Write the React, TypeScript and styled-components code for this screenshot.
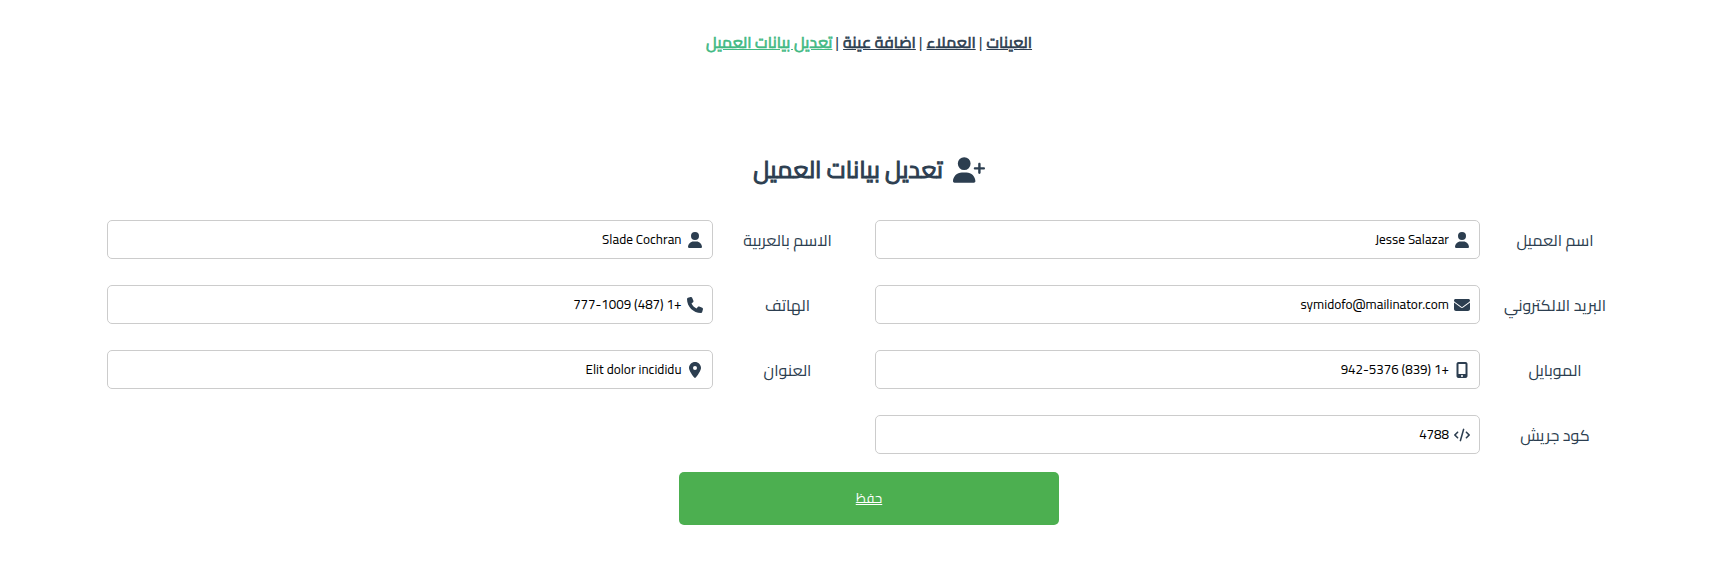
import React from "react";
import styled, { createGlobalStyle } from "styled-components";
import {
  FaCode,
  FaEnvelope,
  FaLocationDot,
  FaMobileScreenButton,
  FaPhone,
  FaUser,
  FaUserPlus,
} from "react-icons/fa6";
import type { IconType } from "react-icons";

const GlobalStyle = createGlobalStyle`
  * { box-sizing: border-box; }
  body {
    margin: 0;
    background: #fff;
    color: #2c3e50;
    font-family: Cairo, "Noto Sans", "DejaVu Sans", sans-serif;
  }
`;

const Page = styled.div`
  padding-left: 18px;
`;

const Nav = styled.nav`
  display: flex;
  justify-content: center;
  align-items: center;
  gap: 4px;
  padding: 29px 30px 31px;
  font-size: 16px;
  line-height: 26px;
`;

const NavLink = styled.a<{ $active?: boolean }>`
  color: ${(p) => (p.$active ? "#42b983" : "#2c3e50")};
  -webkit-text-stroke: 0.04em;
`;

const Separator = styled.span`
  margin: 0 -1px;
  padding: 0 1px 0 0;
`;

const Title = styled.h1`
  display: flex;
  justify-content: center;
  align-items: center;
  gap: 10px;
  margin: 64px 0 30px;
  font-size: 24px;
  font-weight: 400;
  line-height: 40px;
  -webkit-text-stroke: 0.04em;
`;

const TitleIcon = styled(FaUserPlus)`
  width: 32px;
  height: 26px;
`;

const Form = styled.form`
  display: flex;
  flex-direction: column;
  align-items: center;
  gap: 18px;
`;

const Fields = styled.div`
  align-self: stretch;
  display: grid;
  grid-template-columns: repeat(2, 1fr);
  row-gap: 26px;
  padding: 0 90px 0 77px;
`;

const Field = styled.div`
  display: flex;
  align-items: center;
  padding-left: 12px;
`;

const Label = styled.label`
  flex: 0 0 150px;
  text-align: center;
  font-size: 16px;
  line-height: 24px;
`;

const InputBox = styled.div`
  flex: 1;
  min-width: 0;
  display: flex;
  align-items: center;
  gap: 5px;
  padding: 0 9px;
  border: 1px solid #ccc;
  border-radius: 5px;

  svg {
    flex: 0 0 16px;
    height: 16px;
  }
`;

const Input = styled.input`
  flex: 1;
  min-width: 0;
  height: 37px;
  padding: 0;
  border: 0;
  outline: 0;
  background: none;
  color: #000;
  font-family: inherit;
`;

const SaveButton = styled.button`
  width: 380px;
  max-width: 100%;
  height: 53px;
  border: 0;
  border-radius: 5px;
  background: #4caf50;
  color: #fff;
  font-family: inherit;
  text-decoration: underline;
  cursor: pointer;
`;

interface FieldData {
  id: string;
  label: string;
  value: string;
  icon: IconType;
}

const fields: FieldData[] = [
  { id: "name", label: "اسم العميل", value: "Jesse Salazar", icon: FaUser },
  { id: "name-ar", label: "الاسم بالعربية", value: "Slade Cochran", icon: FaUser },
  { id: "email", label: "البريد الالكتروني", value: "symidofo@mailinator.com", icon: FaEnvelope },
  { id: "phone", label: "الهاتف", value: "+1 (487) 777-1009", icon: FaPhone },
  { id: "mobile", label: "الموبايل", value: "+1 (839) 942-5376", icon: FaMobileScreenButton },
  { id: "address", label: "العنوان", value: "Elit dolor incididu", icon: FaLocationDot },
  { id: "code", label: "كود جريش", value: "4788", icon: FaCode },
];

export default function App() {
  return (
    <Page dir="rtl" lang="ar">
      <GlobalStyle />
      <Nav>
        <NavLink href="#samples">العينات</NavLink>
        <Separator>|</Separator>
        <NavLink href="#clients">العملاء</NavLink>
        <Separator>|</Separator>
        <NavLink href="#add-sample">اضافة عينة</NavLink>
        <Separator>|</Separator>
        <NavLink href="#edit-client" $active>تعديل بيانات العميل</NavLink>
      </Nav>
      <main>
        <Title>
          <TitleIcon />
          تعديل بيانات العميل
        </Title>
        <Form onSubmit={(e) => e.preventDefault()}>
          <Fields>
            {fields.map(({ id, label, value, icon: Icon }) => (
              <Field key={id}>
                <Label htmlFor={id}>{label}</Label>
                <InputBox>
                  <Icon />
                  <Input id={id} type="text" defaultValue={value} />
                </InputBox>
              </Field>
            ))}
          </Fields>
          <SaveButton type="submit">حفظ</SaveButton>
        </Form>
      </main>
    </Page>
  );
}
